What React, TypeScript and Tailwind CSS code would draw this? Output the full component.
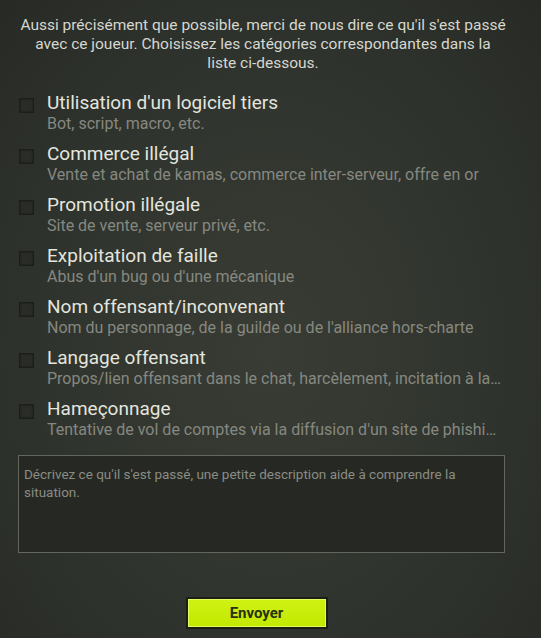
import React, { useState } from 'react';

interface Category {
  title: string;
  hint: string;
}

const categories: Category[] = [
  { title: "Utilisation d'un logiciel tiers", hint: 'Bot, script, macro, etc.' },
  { title: 'Commerce illégal', hint: 'Vente et achat de kamas, commerce inter-serveur, offre en or' },
  { title: 'Promotion illégale', hint: 'Site de vente, serveur privé, etc.' },
  { title: 'Exploitation de faille', hint: "Abus d'un bug ou d'une mécanique" },
  { title: 'Nom offensant/inconvenant', hint: "Nom du personnage, de la guilde ou de l'alliance hors-charte" },
  { title: 'Langage offensant', hint: 'Propos/lien offensant dans le chat, harcèlement, incitation à la haine' },
  { title: 'Hameçonnage', hint: "Tentative de vol de comptes via la diffusion d'un site de phishing" },
];

const App: React.FC = () => {
  const [checked, setChecked] = useState<boolean[]>(categories.map(() => false));
  const [description, setDescription] = useState('');

  const toggle = (index: number) => {
    setChecked((prev) => prev.map((c, i) => (i === index ? !c : c)));
  };

  return (
    <div
      className="w-[541px] h-[638px] overflow-hidden bg-[radial-gradient(ellipse_at_50%_55%,#383c34_0%,#30342e_55%,#272a25_100%)] flex flex-col"
      style={{ fontFamily: 'Roboto, "Liberation Sans", sans-serif' }}
    >
      <p className="pt-[16px] pl-[18px] pr-[33px] text-center text-[15.5px] leading-[19px] text-[#d6d7cf]">
        Aussi précisément que possible, merci de nous dire ce qu'il s'est passé avec ce joueur. Choisissez les catégories
        correspondantes dans la
        <br />
        liste ci-dessous.
      </p>

      {/* category list */}
      <div className="mt-[19px] flex flex-col gap-[7px]">
        {categories.map((cat, index) => (
          <button
            key={cat.title}
            onClick={() => toggle(index)}
            className="flex items-start text-left pl-[19px] pr-[40px] h-[44px]"
          >
            <span className="mt-[6px] w-[15px] h-[15px] shrink-0 border border-[#1c1e1a] bg-[#2a2c27] shadow-[inset_0_0_2px_rgba(0,0,0,0.6)] flex items-center justify-center">
              {checked[index] && <span className="w-[8px] h-[8px] bg-[#c4ec0c]" />}
            </span>
            <span className="ml-[13px] flex flex-col min-w-0">
              <span className="text-[19px] leading-[22px] text-[#e4e5de]">{cat.title}</span>
              <span className="text-[16px] leading-[19px] text-[#868880] truncate">{cat.hint}</span>
            </span>
          </button>
        ))}
      </div>

      <textarea
        value={description}
        onChange={(e) => setDescription(e.target.value)}
        placeholder="Décrivez ce qu'il s'est passé, une petite description aide à comprendre la situation."
        className="mt-[13px] ml-[18px] w-[487px] h-[98px] resize-none border border-[#62665c] bg-[#262923] px-[5px] pt-[9px] text-[13.5px] leading-[18px] text-[#d6d7cf] placeholder:text-[#8a8c84] outline-none"
      />

      <div className="mt-[44px] flex justify-center pr-[28px]">
        <button className="w-[142px] h-[32px] border-2 border-[#1c1f12] bg-[linear-gradient(#d0f214,#c2e800)] shadow-[inset_0_0_0_1px_#e2fd60] text-[15px] font-bold text-[#283012]">
          Envoyer
        </button>
      </div>
    </div>
  );
};

export default App;
